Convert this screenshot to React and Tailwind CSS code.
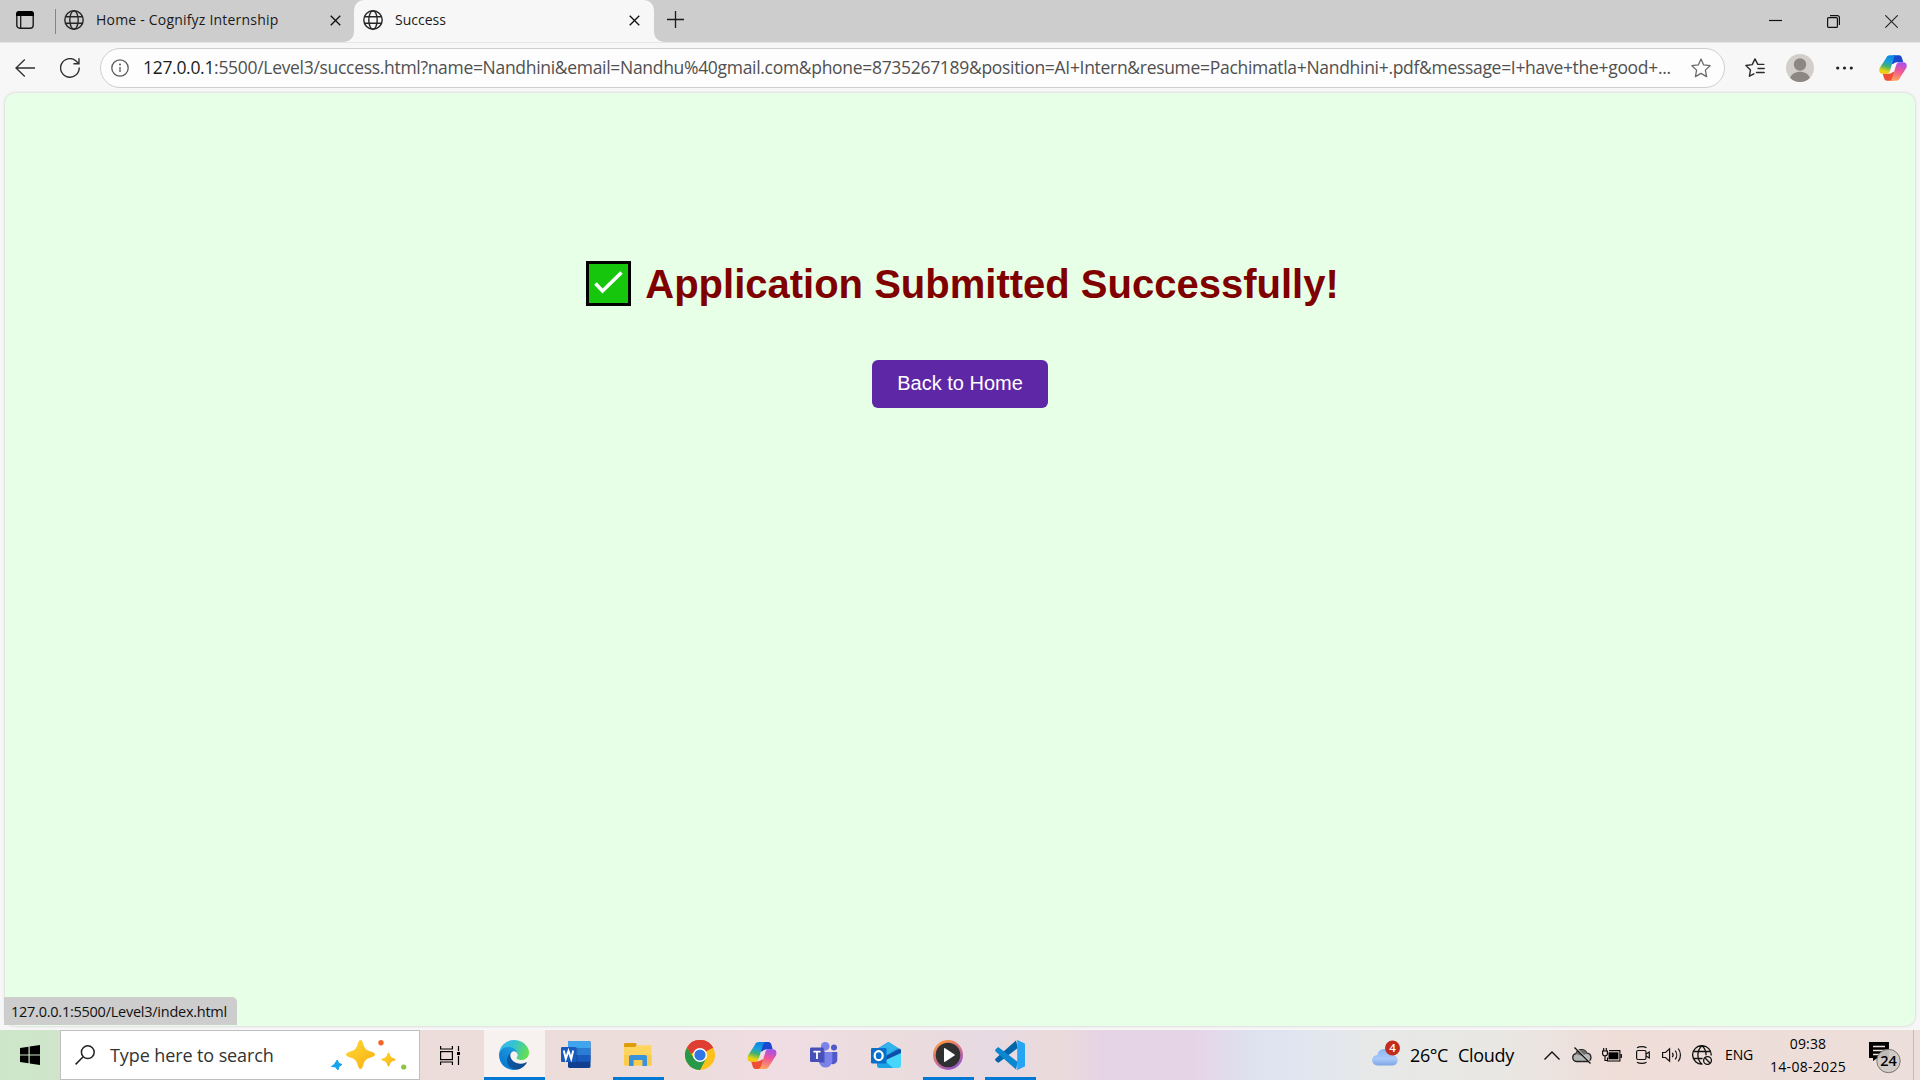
function Globe({ className }) {
  return (
    <svg className={className} viewBox="0 0 20 20" fill="none" stroke="#262626" strokeWidth="1.4">
      <circle cx="10" cy="10" r="9.2" />
      <ellipse cx="10" cy="10" rx="4.2" ry="9.2" />
      <path d="M1.6 6.7h16.8M1.6 13.3h16.8" />
    </svg>
  );
}

function CloseX({ className }) {
  return (
    <svg className={className} viewBox="0 0 12 12" fill="none" stroke="#111" strokeWidth="1.5">
      <path d="M.8.8l10.4 10.4M11.2.8L.8 11.2" />
    </svg>
  );
}

function Copilot({ className, id }) {
  const a = `${id}-cool`;
  const b = `${id}-warm`;
  return (
    <svg className={className} viewBox="0 0 30 27.5">
      <defs>
        <linearGradient id={a} x1="0.6" y1="0" x2="0.35" y2="1">
          <stop offset="0" stopColor="#0b86e6" />
          <stop offset="0.35" stopColor="#1ba0dc" />
          <stop offset="0.6" stopColor="#43b26a" />
          <stop offset="0.88" stopColor="#ecd40f" />
          <stop offset="1" stopColor="#f6c40a" />
        </linearGradient>
        <linearGradient id={b} x1="0.6" y1="0" x2="0.4" y2="1">
          <stop offset="0" stopColor="#a551ee" />
          <stop offset="0.45" stopColor="#ee5599" />
          <stop offset="1" stopColor="#ffa45c" />
        </linearGradient>
      </defs>
      <path d="M15 0h6.500c2 0 2.800 1.500 3.300 3.500l1.200 4.200h-5.500c-2.200 0-3.500.2-5 1.600L13 10z" fill="#1b48ce" />
      <path d="M15 27.500H8.500c-2 0-2.800-1.500-3.300-3.500L4 19.800h5.500c2.200 0 3.500-.2 5-1.600L17 17.500z" fill="#ee4f35" />
      <path d="M7.500 3.200C8.300 1.200 9.500 0 12 0h7c-1.700.2-2.500 1.300-3.100 3.200L11.600 17c-.7 2.200-1.800 3-3.800 3H4.200C.6 20-.3 17.300.6 14z" fill={`url(#${a})`} />
      <path d="M22.500 24.300c-.8 2-2 3.200-4.500 3.200h-7c1.700-.2 2.500-1.300 3.100-3.200l4.300-13.800c.7-2.200 1.800-3 3.800-3h3.600c3.600 0 4.500 2.700 3.600 6z" fill={`url(#${b})`} />
    </svg>
  );
}

function Edge() {
  return (
    <svg className="mr-px size-[30px]" viewBox="0 0 256 256">
      <defs>
        <linearGradient id="edge-deep" x1="0.1" y1="0.5" x2="1" y2="0.6">
          <stop offset="0" stopColor="#0c59a4" />
          <stop offset="1" stopColor="#114a8b" />
        </linearGradient>
        <linearGradient id="edge-mid" x1="0.8" y1="0.1" x2="0.2" y2="1">
          <stop offset="0" stopColor="#1b9de2" />
          <stop offset="0.5" stopColor="#1387d6" />
          <stop offset="1" stopColor="#0078d4" />
        </linearGradient>
        <linearGradient id="edge-top" x1="0" y1="0.3" x2="1" y2="0.6">
          <stop offset="0" stopColor="#35b6ef" />
          <stop offset="0.45" stopColor="#35c3cf" />
          <stop offset="1" stopColor="#67e04a" />
        </linearGradient>
      </defs>
      <path fill="url(#edge-deep)" d="M231.100 190.500a93.700 93.700 0 0 1-10.500 4.700 101.900 101.900 0 0 1-35.900 6.500c-47.300 0-88.500-32.500-88.500-74.300a31.500 31.500 0 0 1 16.400-27.300c-42.800 1.800-53.800 46.400-53.800 72.500 0 73.900 68.100 81.400 82.800 81.400 7.900 0 19.800-2.300 27-4.600l1.300-.4a128.300 128.300 0 0 0 66.600-52.800 4 4 0 0 0-5.400-5.700z" />
      <path fill="url(#edge-mid)" d="M105.700 241.400A79.200 79.200 0 0 1 83 220.100a80.700 80.700 0 0 1 29.500-120c3.100-1.500 8.500-4.100 15.500-4a32.400 32.400 0 0 1 25.700 13 31.900 31.900 0 0 1 6.400 18.700c0-.2 24.500-79.600-80-79.600-43.900 0-80 41.600-80 78.200a130.200 130.200 0 0 0 12.100 56 128 128 0 0 0 156.400 67.100 75.600 75.600 0 0 1-62.900-8.100z" />
      <path fill="url(#edge-top)" d="M152.300 148.900c-.8 1-3.300 2.500-3.300 5.600 0 2.600 1.700 5.100 4.700 7.200 14.400 10 41.500 8.700 41.600 8.700a59.600 59.600 0 0 0 30.300-8.300 61.400 61.400 0 0 0 30.400-52.900c.3-22.400-8-37.300-11.300-43.900C223.500 23.800 177.700 0 128 0A128 128 0 0 0 0 126.200c.5-36.500 36.800-66 80-66 3.500 0 23.500.3 42 10 16.300 8.600 24.900 19 30.900 29.200 6.200 10.700 7.300 24.200 7.300 29.500s-2.800 13.400-7.900 20z" />
    </svg>
  );
}

function Word() {
  return (
    <svg className="h-7 w-[30px]" viewBox="0 0 30 28">
      <rect x="7" y="0" width="22.500" height="27" rx="1.400" fill="#103f91" />
      <path d="M7 14h22.500v6.700H7z" fill="#185abd" />
      <path d="M7 7h22.500v7H7z" fill="#2b7cd3" />
      <path d="M8.400 0h19.700a1.400 1.400 0 0 1 1.400 1.400V7H7V1.400A1.400 1.400 0 0 1 8.400 0z" fill="#41a5ee" />
      <path d="M7 6.500h9.500v16H7z" fill="#0d3f86" opacity=".35" />
      <rect x="0" y="6" width="15" height="15" rx="1.300" fill="#185abd" />
      <path d="M2.800 9.500l2 8.300 2.700-8 2.700 8 2-8.300" fill="none" stroke="#fff" strokeWidth="2" />
    </svg>
  );
}

function Explorer() {
  return (
    <svg className="h-6 w-7" viewBox="0 0 28 24">
      <path d="M0 1.500C0 .6.500 0 1.400 0h9.800c.8 0 1.300.6 1.300 1.300v3.200H0z" fill="#e09b0a" />
      <path d="M0 4h11l1.800-1.800h13.700c.6 0 1 .4 1 1V21.500c0 .6-.4 1-1 1H1c-.6 0-1-.4-1-1z" fill="#ffd55f" />
      <path d="M0 12h27.500v9.500c0 .6-.4 1-1 1H1c-.6 0-1-.4-1-1z" fill="#fdcb4b" />
      <path d="M5 23V14c0-1.200.8-2 2-2h14c1.200 0 2 .8 2 2v9h-4.600v-6H9.600v6z" fill="#3a93d8" />
    </svg>
  );
}

function Chrome() {
  return (
    <svg className="size-[30px]" viewBox="0 0 30 30">
      <circle cx="15" cy="15" r="15" fill="#fcc21b" />
      <path d="M15 15L2 7.500A15 15 0 0 1 28 7.500z" fill="#df3f32" />
      <path d="M15 8.200H28.400A15 15 0 0 0 2 7.500L6 14z" fill="#df3f32" />
      <path d="M2 7.500A15 15 0 0 0 15 30l6-11.300L9 18.400z" fill="#279847" />
      <circle cx="15" cy="15" r="7" fill="#fff" />
      <circle cx="15" cy="15" r="5.600" fill="#3076e8" />
    </svg>
  );
}

function Teams() {
  return (
    <svg className="h-[26px] w-7" viewBox="0 0 28 26">
      <circle cx="24" cy="5.500" r="3" fill="#5059c9" />
      <path d="M19 10h8.300v7.500a4.500 4.500 0 0 1-8.300 2.500z" fill="#5059c9" />
      <circle cx="15.200" cy="4.300" r="4.300" fill="#7b83eb" />
      <path d="M9 10h13.300v9a6.700 6.700 0 0 1-13.300 1z" fill="#7b83eb" />
      <path d="M9 8h6v13H9z" fill="#3d46a8" opacity=".4" />
      <rect x="0" y="5.500" width="13.800" height="14.500" rx="1.200" fill="#464eb8" />
      <path d="M3.400 9.600h7.200M7 9.600v7.500" fill="none" stroke="#fff" strokeWidth="1.800" />
    </svg>
  );
}

function Outlook() {
  return (
    <svg className="h-[27px] w-[30px]" viewBox="0 0 30 27">
      <path d="M4 8L16.500.5c.7-.4 1.300-.4 2 0L30 8v5L15 19 4 13z" fill="#1a93dc" />
      <path d="M8 6L17.500.3 27 6 12 15z" fill="#32b3ec" />
      <path d="M15 14L29 6.500 30 8.500v5L15 21z" fill="#0d4fa8" />
      <path d="M30 11v12.500c0 1.500-1 2.500-2.500 2.500H8l-2-4z" fill="#48d5fb" />
      <path d="M6 12l16 13.900H8.500C7 26 6 25 6 23.500z" fill="#1ba4e6" />
      <rect x="0" y="6" width="15.500" height="15.500" rx="1.300" fill="#0a6fc9" />
      <ellipse cx="7.700" cy="13.700" rx="4" ry="4.500" fill="none" stroke="#fff" strokeWidth="2.200" />
    </svg>
  );
}

function MediaPlayer() {
  return (
    <svg className="size-[30px]" viewBox="0 0 30 30">
      <defs>
        <linearGradient id="media-ring" x1="0.200" y1="0" x2="0.800" y2="1">
          <stop offset="0" stopColor="#ff9a3c" />
          <stop offset="0.500" stopColor="#d0708a" />
          <stop offset="1" stopColor="#8a52d0" />
        </linearGradient>
      </defs>
      <circle cx="15" cy="15" r="15" fill="url(#media-ring)" />
      <circle cx="15" cy="15" r="12.300" fill="#303030" />
      <path d="M11 8.800c0-.6.600-.9 1.100-.6l9.400 6.200c.4.300.4.900 0 1.200l-9.400 6.200c-.5.300-1.100 0-1.100-.6z" fill="#fff" />
    </svg>
  );
}

function VsCode() {
  return (
    <svg className="size-[30px]" viewBox="0 0 100 100">
      <path d="M70 2L2 62c-2 2-2 5 0 7l6 5c2 2 4 2 6 0L76 27z" fill="#0065a9" />
      <path d="M70 98L2 38c-2-2-2-5 0-7l6-5c2-2 4-2 6 0l62 47z" fill="#0b86d0" />
      <path d="M76 99c-3 1-6 0-8-2 3 2 7 1 7-3V6c0-4-4-5-7-3 2-2 5-3 8-2l20 10c3 1 4 3 4 6v66c0 3-1 5-4 6z" fill="#1f9cf0" />
      <path d="M75 2v96l21-9c3-1 4-3 4-6V17c0-3-1-5-4-6z" fill="#25a5f3" />
    </svg>
  );
}

function TaskSlot({ children, active, running }) {
  return (
    <div className={active ? 'flex h-full w-[61px] flex-col items-center bg-[#f7f2f0]' : 'flex h-full w-[62px] flex-col items-center'}>
      <div className="flex h-[47px] items-center pt-[3px]">{children}</div>
      {active && <div className="h-[3px] w-full bg-[#0078d4]" />}
      {running && <div className="h-[3px] w-[51px] bg-[#0078d4]" />}
    </div>
  );
}

function TabBar() {
  return (
    <div className="flex h-[42px] bg-[#f7f7f7]">
      <div className="flex w-[354px] items-start rounded-br-[10px] bg-[#cdcdcd]">
        <svg className="mt-[11px] ml-4 h-[18px] w-[18px]" viewBox="0 0 18 18">
          <rect x=".8" y=".8" width="16.400" height="16.400" rx="3" fill="none" stroke="#1a1a1a" strokeWidth="1.400" />
          <path d="M0 5V3a3 3 0 0 1 3-3h12a3 3 0 0 1 3 3v2z" fill="#000" />
          <path d="M4.700 5v12" stroke="#1a1a1a" strokeWidth="1.300" />
        </svg>
        <div className="mt-[9px] ml-[21px] h-[25px] w-px bg-[#858585]" />
        <Globe className="mt-[10px] ml-2 size-5" />
        <span className="ml-3 w-[234px] text-sm leading-10 tracking-[0.2px] whitespace-nowrap text-[#1a1a1a]">Home - Cognifyz Internship</span>
        <CloseX className="mt-[15px] size-[11px]" />
      </div>
      <div className="w-[300px] bg-linear-to-b from-[#cdcdcd] from-50% to-[#f7f7f7] to-50%">
        <div className="flex h-full items-start rounded-t-[10px] bg-[#f7f7f7]">
          <Globe className="mt-[10px] ml-[9px] size-5" />
          <span className="ml-3 w-[234px] text-sm leading-10 text-[#1a1a1a]">Success</span>
          <CloseX className="mt-[15px] size-[11px]" />
        </div>
      </div>
      <div className="flex flex-1 items-start rounded-bl-[10px] bg-[#cdcdcd]">
        <svg className="mt-[11px] ml-[13px] size-[17px]" viewBox="0 0 17 17" fill="none" stroke="#1a1a1a" strokeWidth="1.300">
          <path d="M8.500 0v17M0 8.500h17" />
        </svg>
        <svg className="mt-[14px] ml-auto h-[14px] w-[13px]" viewBox="0 0 13 14">
          <path d="M0 6.500h13" stroke="#111" strokeWidth="1.200" />
        </svg>
        <svg className="mt-[15px] ml-[45px] size-[13px]" viewBox="0 0 13 13" fill="none" stroke="#111" strokeWidth="1.200">
          <rect x=".6" y="2.600" width="9.800" height="9.800" rx="1" />
          <path d="M3 .6h7.400a2 2 0 0 1 2 2V10" />
        </svg>
        <svg className="mt-[15px] mr-[22px] ml-[45px] size-[13px]" viewBox="0 0 13 13" stroke="#222" strokeWidth="1.100">
          <path d="M.3.300l12.400 12.400M12.700.300L.3 12.700" />
        </svg>
      </div>
    </div>
  );
}

function Toolbar() {
  return (
    <div className="flex h-[50px] items-center border-t border-[#e6e6e6] bg-[#f7f7f7] pl-[15px]">
      <svg className="h-[18px] w-5" viewBox="0 0 20 18" fill="none" stroke="#303030" strokeWidth="1.300">
        <path d="M20 9H1M9.800.500L1 9l8.800 8.500" />
      </svg>
      <svg className="ml-[25px] size-5" viewBox="0 0 20 20" fill="none" stroke="#303030" strokeWidth="1.400">
        <path d="M19.200 9.600A9.300 9.300 0 1 1 15.800 2.700L18.500 5.400M19 .3v5.500h-5.600" />
      </svg>
      <div className="ml-5 flex h-10 w-[1625px] items-center rounded-full border border-[#cfcfcf] bg-[#fdfdfd] pl-[10px]">
        <svg className="size-[18px]" viewBox="0 0 18 18" fill="none" stroke="#5a5a5a" strokeWidth="1.300">
          <circle cx="9" cy="9" r="8.200" />
          <path d="M9 8v5" />
          <circle cx="9" cy="5.500" r=".4" />
        </svg>
        <span className="ml-[14px] w-[1548px] text-[17.5px] tracking-[-0.305px] whitespace-nowrap text-[#505050]">
          <span className="text-[#1c1c1c]">127.0.0.1</span>:5500/Level3/success.html?name=Nandhini&amp;email=Nandhu%40gmail.com&amp;phone=8735267189&amp;position=AI+Intern&amp;resume=Pachimatla+Nandhini+.pdf&amp;message=I+have+the+good+...
        </span>
        <svg className="h-5 w-5" viewBox="0 0 20 20" fill="none" stroke="#6a6a6a" strokeWidth="1.300" strokeLinejoin="round">
          <path d="M10 1l2.700 5.900 6.400.8-4.700 4.400 1.200 6.500L10 15.400l-5.600 3.200 1.200-6.500L.9 7.700l6.400-.8z" />
        </svg>
      </div>
      <svg className="ml-5 h-5 w-5" viewBox="0 0 20 20" fill="none" stroke="#2b2b2b" strokeWidth="1.400" strokeLinejoin="round" strokeLinecap="round">
        <path d="M18.800 6.400h-6L10 .9 7.200 6.600.9 7.500l4.600 4.400-1.100 6.300 4.500-2.400M13 10.500h6.200M11.500 14.500h7.700" />
      </svg>
      <svg className="ml-[21px] size-7" viewBox="0 0 28 28">
        <circle cx="14" cy="14" r="14" fill="#d2cfcb" />
        <circle cx="14" cy="10.500" r="6.200" fill="#8c8783" />
        <path d="M4.200 24c1.300-4 5-6.200 9.800-6.200s8.500 2.200 9.800 6.200a14 14 0 0 1-19.600 0z" fill="#8c8783" />
      </svg>
      <svg className="ml-[22px] h-1 w-[17px]" viewBox="0 0 17 4" fill="#222">
        <circle cx="1.700" cy="2" r="1.600" />
        <circle cx="8.500" cy="2" r="1.600" />
        <circle cx="15.300" cy="2" r="1.600" />
      </svg>
      <Copilot id="bar" className="ml-[26px] h-[26px] w-7" />
    </div>
  );
}

function Tray() {
  return (
    <div className="ml-auto flex h-full w-[548px] items-center text-black">
      <svg className="mb-1 h-[26px] w-7" viewBox="0 0 28 26">
        <defs>
          <linearGradient id="cloud" x1="0" y1="0" x2="0" y2="1">
            <stop offset="0" stopColor="#8fb6f4" />
            <stop offset="0.600" stopColor="#a9c8f8" />
            <stop offset="1" stopColor="#7ca4e6" />
          </linearGradient>
        </defs>
        <path d="M5.500 25.500a5.300 5.300 0 0 1-.3-10.600 7.600 7.600 0 0 1 14.800 0 5.300 5.300 0 0 1 .8 10.600z" fill="url(#cloud)" />
        <circle cx="20.500" cy="8" r="7.500" fill="#c42b1c" />
        <text x="20.500" y="12" textAnchor="middle" fontFamily="Open Sans, sans-serif" fontWeight="600" fontSize="11.500" fill="#fff">4</text>
      </svg>
      <span className="ml-[10px] w-12 text-lg tracking-[-0.4px]">26°C</span>
      <span className="w-[86px] text-lg tracking-[-0.3px]">Cloudy</span>
      <svg className="h-[9px] w-4" viewBox="0 0 16 9" fill="none" stroke="#111" strokeWidth="1.400">
        <path d="M.5 8.500L8 1l7.500 7.500" />
      </svg>
      <svg className="ml-3 h-[17px] w-5" viewBox="0 0 20 17">
        <path d="M4.500 14.500a4 4 0 0 1-.6-7.900A6 6 0 0 1 15 6.200a4.200 4.200 0 0 1 .6 8.300z" fill="#b4b4b4" stroke="#222" strokeWidth="1.300" />
        <path d="M4 7a6 6 0 0 1 11-.8L10 9z" fill="#6c6c6c" />
        <path d="M3.500.5l16 16" stroke="#efe4df" strokeWidth="1.200" />
        <path d="M2.500.5l16 16" stroke="#111" strokeWidth="1.300" />
      </svg>
      <svg className="ml-[10px] h-[14px] w-5" viewBox="0 0 20 14">
        <path d="M.6 3h4.800v2.500a2.400 2.400 0 0 1-4.800 0zM1.700 0v3M4.300 0v3M3 8v4.500h3" fill="none" stroke="#000" strokeWidth="1.100" />
        <path d="M7 2.600h10.900v10.400H5.500V9.500" fill="none" stroke="#000" strokeWidth="1.100" />
        <path d="M6.500 4.300h9.900v7H6.500z" fill="#000" />
        <path d="M19.200 6v4" stroke="#000" strokeWidth="1.400" />
      </svg>
      <svg className="ml-[14px] h-[18px] w-[14px]" viewBox="0 0 14 18" fill="none" stroke="#111" strokeWidth="1.200">
        <rect x=".6" y="4.500" width="9.400" height="9" rx="1.500" />
        <path d="M10 8l3.300-2v6L10 10M1 1.800C3.500.3 8 .3 10.500 1.800M1 16.200c2.500 1.500 7 1.500 9.500 0" />
      </svg>
      <svg className="ml-3 h-4 w-5" viewBox="0 0 20 16" fill="none" stroke="#111" strokeWidth="1.200">
        <path d="M.6 5.500h2.900L7.600 1.800v12.400L3.500 10.500H.6zM10.300 5.800c1 1.300 1 3.100 0 4.400M13.200 3.600c2 2.500 2 6.300 0 8.800M16.200 1.500c3 3.800 3 9.200 0 13" />
      </svg>
      <svg className="ml-[10px] size-5" viewBox="0 0 20 20" fill="none" stroke="#111" strokeWidth="1.300">
        <path d="M10.500 19.200A9.300 9.300 0 1 1 19.200 10.500M10 .7C4.500 5.500 4.500 14.500 10 19.300M10 .7c3 2.600 4.200 6 4 9.500M1.500 6.500h17M1.500 13.500h9" />
        <circle cx="15.500" cy="15.500" r="3.900" />
        <path d="M12.800 12.800l5.400 5.400" />
      </svg>
      <span className="ml-[13px] w-[43px] text-sm tracking-[-0.1px]">ENG</span>
      <div className="flex w-20 flex-col items-center text-sm leading-[23px] tracking-[0.15px]">
        <span>09:38</span>
        <span className="tracking-[0.3px]">14-08-2025</span>
      </div>
      <svg className="mt-1 ml-[20px] h-[34px] w-[33px]" viewBox="0 0 33 34">
        <path d="M1 2h20v16H9.500L5 21v-3H1z" fill="#000" />
        <path d="M5 6.500h12M5 10.500h12M5 14.500h8" stroke="#efe1dc" strokeWidth="1.300" />
        <circle cx="20.500" cy="21" r="11.700" fill="#cfc8c5" fillOpacity=".93" stroke="#777" strokeWidth="1" />
        <text x="20.500" y="26.200" textAnchor="middle" fontFamily="Open Sans, sans-serif" fontWeight="600" fontSize="14.500" fill="#000">24</text>
      </svg>
      <div className="ml-3 h-full w-px bg-[#c9b9b5]" />
    </div>
  );
}

function Taskbar() {
  return (
    <div className="flex h-[50px] bg-[linear-gradient(90deg,#cde6c8_0px,#d0e5cc_60px,#ecdcda_420px,#ecdcda_640px,#efdde3_780px,#ebdcdd_900px,#e7d9e2_990px,#eadadb_1060px,#e5d3e6_1110px,#e5d3e6_1190px,#dfe1ef_1250px,#e0e5f0_1300px,#e7e9e8_1370px,#e9e7e3_1510px,#efddd8_1610px,#ecdeda_1920px)]">
      <div className="flex w-[60px] items-center justify-center">
        <svg className="size-5" viewBox="0 0 20 20">
          <path d="M0 3l8.500-1.200v7.700H0zM9.700 1.600L20 0v9.500H9.700zM0 10.500h8.500v7.700L0 17zM9.700 10.500H20V20L9.700 18.400z" fill="#000" />
        </svg>
      </div>
      <div className="flex w-[360px] items-center border border-[#bfbfbf] bg-white pl-[14px]">
        <svg className="size-5" viewBox="0 0 20 20" fill="none" stroke="#222" strokeWidth="1.500">
          <circle cx="12.800" cy="7.200" r="6.400" />
          <path d="M8.200 11.800L.6 19.400" />
        </svg>
        <span className="ml-[15px] w-[221px] text-lg tracking-[-0.1px] text-[#333]">Type here to search</span>
        <svg className="h-[30px] w-[76px]" viewBox="0 0 76 30">
          <defs>
            <linearGradient id="spark" x1="0" y1="0" x2="1" y2="1">
              <stop offset="0" stopColor="#ffd93b" />
              <stop offset="1" stopColor="#f7ae0c" />
            </linearGradient>
          </defs>
          <path d="M29.500 0c1.300 0 2 1.200 2.800 4 1.200 4.300 2.600 6 6.700 7.300 3.200 1 5 1.600 5 3.200s-1.800 2.200-5 3.200c-4.100 1.300-5.500 3-6.700 7.300-.8 2.800-1.500 4-2.800 4s-2-1.200-2.800-4c-1.200-4.300-2.600-6-6.700-7.300-3.200-1-5-1.600-5-3.200s1.800-2.200 5-3.200c4.100-1.300 5.500-3 6.700-7.300.8-2.800 1.500-4 2.800-4z" fill="url(#spark)" />
          <path d="M57.500 12.500c.7 0 1 .7 1.400 2 .6 2 1.200 2.800 3.200 3.400 1.500.5 2.400.8 2.400 1.600s-.9 1.100-2.400 1.600c-2 .6-2.600 1.400-3.200 3.400-.4 1.300-.7 2-1.400 2s-1-.7-1.400-2c-.6-2-1.200-2.800-3.200-3.400-1.500-.5-2.400-.8-2.400-1.600s.9-1.100 2.400-1.600c2-.6 2.600-1.400 3.200-3.400.4-1.300.7-2 1.400-2z" fill="url(#spark)" />
          <path d="M6.200 20l1.500 3.300 3.300 1.200-2.800 1.800-1.300 3.700-2.300-3-4.100-.5 3-2.200z" fill="#12a5ee" stroke="#12a5ee" strokeLinejoin="round" />
          <circle cx="50" cy="2.800" r="2.700" fill="#f2652a" />
          <circle cx="72.700" cy="27" r="2.600" fill="#8cc63f" />
        </svg>
      </div>
      <div className="flex w-16 items-center pl-5">
        <svg className="h-[19px] w-5" viewBox="0 0 20 19" fill="none" stroke="#000" strokeWidth="1.200">
          <path d="M.6 0v3h11.800V0M.6 19v-3h11.800v3" />
          <rect x=".6" y="5.600" width="11.800" height="8" />
          <path d="M18.500 0v5M18.500 10v9" />
          <path d="M17 6h3v3h-3z" fill="#000" stroke="none" />
        </svg>
      </div>
      <TaskSlot active><Edge /></TaskSlot>
      <TaskSlot><Word /></TaskSlot>
      <TaskSlot running><Explorer /></TaskSlot>
      <TaskSlot><Chrome /></TaskSlot>
      <TaskSlot><Copilot id="task" className="h-[27px] w-[30px]" /></TaskSlot>
      <TaskSlot><Teams /></TaskSlot>
      <TaskSlot><Outlook /></TaskSlot>
      <TaskSlot running><MediaPlayer /></TaskSlot>
      <TaskSlot running><VsCode /></TaskSlot>
      <Tray />
    </div>
  );
}

export default function App() {
  return (
    <div className="flex h-[1080px] w-[1920px] flex-col overflow-hidden bg-[#f7f7f7] font-['Open_Sans',sans-serif]">
      <TabBar />
      <Toolbar />
      <div className="relative flex flex-1 px-[5px] pt-px pb-1">
        <div className="flex flex-1 flex-col items-center rounded-[10px] bg-[#e7ffe7] font-['Liberation_Sans',Arial,sans-serif] shadow-[0_0_3px_rgba(0,0,0,0.2)]">
          <h1 className="mt-[166px] flex h-[50px] items-center gap-[14px] pl-[5px] text-[40px] font-bold whitespace-nowrap text-[#800000]">
            <svg className="mb-[2px] size-[45px]" viewBox="0 0 45 45">
              <path d="M1.500 1.500h42v42h-42z" fill="#16c60c" stroke="#000" strokeWidth="3" />
              <path d="M9.500 22.500l7 7.500L35.500 11.500" fill="none" stroke="#fff" strokeWidth="3.600" />
            </svg>
            <span>Application Submitted Successfully!</span>
          </h1>
          <button className="mt-[51px] h-12 w-44 rounded-md bg-[#5e27a6] pb-[2px] text-xl leading-none text-white">Back to Home</button>
        </div>
        <div className="absolute bottom-[5px] left-1 flex h-7 w-[233px] items-center rounded-tr-[5px] bg-[#cdcdcd] pt-[2px] pl-[7px] text-[14.5px] tracking-[-0.25px] text-[#111]">
          127.0.0.1:5500/Level3/index.html
        </div>
      </div>
      <Taskbar />
    </div>
  );
}
